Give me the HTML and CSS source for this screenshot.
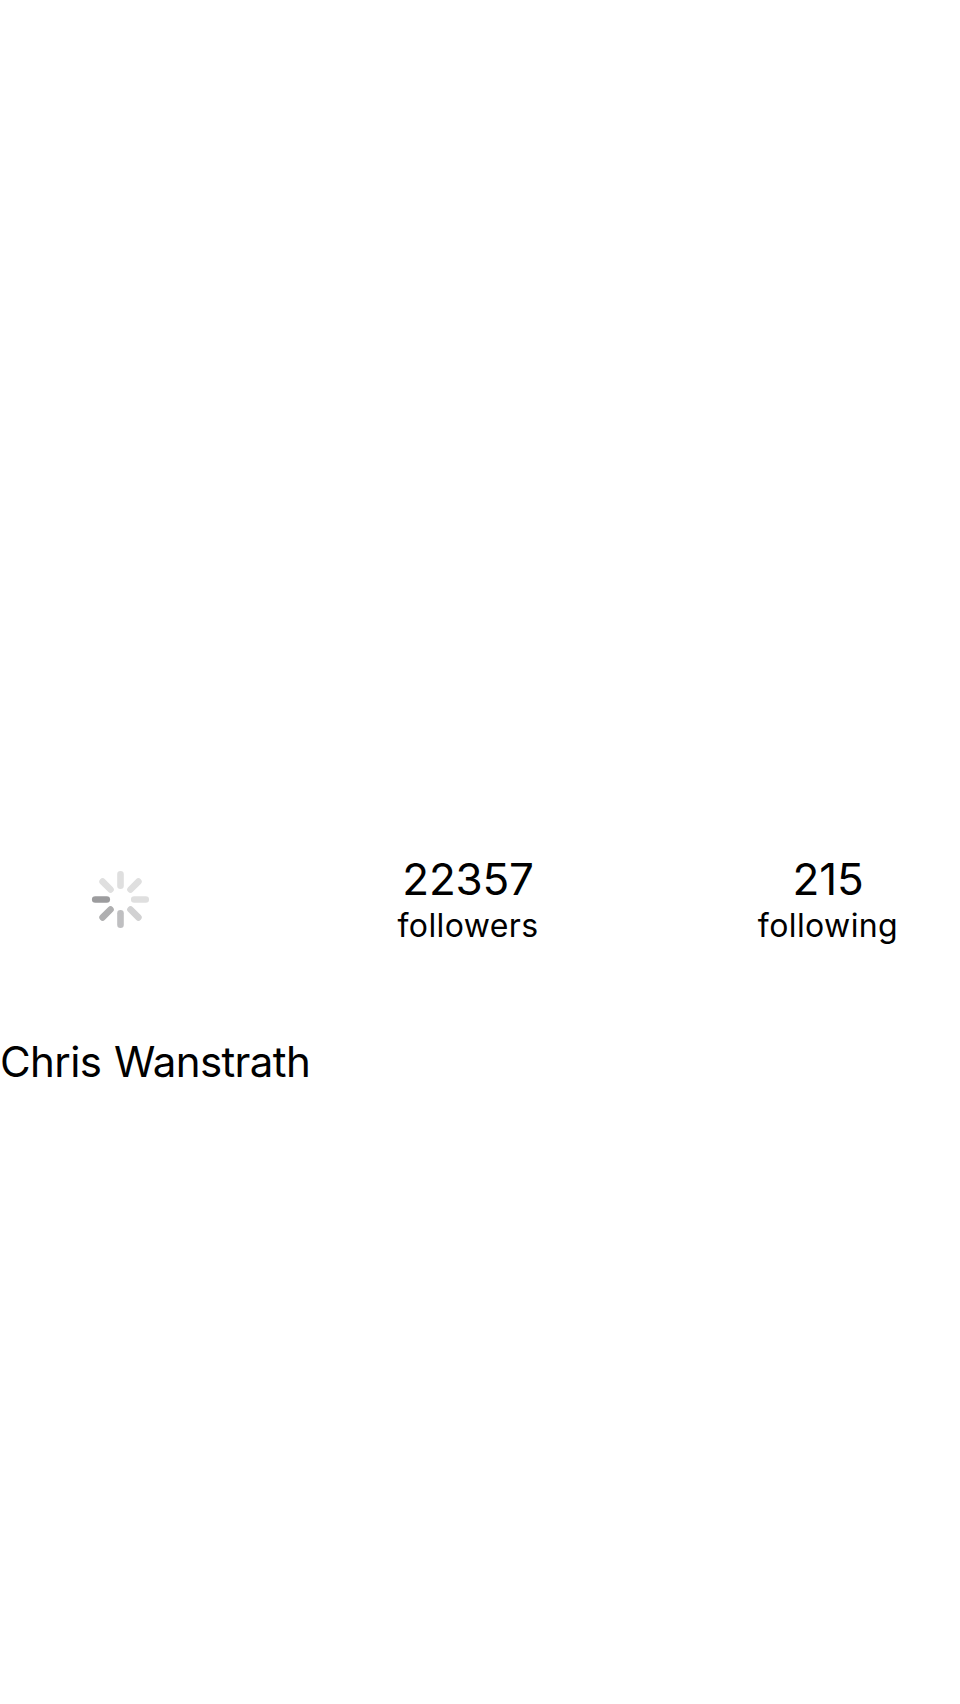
FILE: index.html
```html
<!DOCTYPE html>
<html lang="en">
<head>
<meta charset="utf-8">
<title>Profile</title>
<link rel="stylesheet" href="styles.css">
</head>
<body>
<main class="screen">
  <section class="summary">
    <svg class="spinner" viewBox="-30 -30 60 60" aria-label="Loading">
      <g stroke-width="6.6" stroke-linecap="round">
        <path stroke="#dfdfdf" d="M.5-14.25V-25.75M10.5-10.5L18.4-18.4M14.25-.5H25.75M-9.5-10.5L-17.4-18.4"/>
        <path stroke="#d1d1d2" d="M10.5 9.5L18.4 17.4"/>
        <path stroke="#bfbfc1" d="M.5 13.25V24.75"/>
        <path stroke="#afafb0" d="M-9.5 9.5L-17.4 17.4"/>
        <path stroke="#9c9c9e" d="M-13.25-.5H-24.75"/>
      </g>
    </svg>
    <div class="stats">
      <div class="stat"><span class="count">22357</span><span class="label">followers</span></div>
      <div class="stat"><span class="count">215</span><span class="label">following</span></div>
    </div>
  </section>
  <h1 class="name">Chris Wanstrath</h1>
</main>
</body>
</html>
```
FILE: styles.css
```css
body { margin: 0; background: #fff; color: #000; font-family: Inter, sans-serif; }
.screen { height: 1704px; padding-top: 780px; box-sizing: border-box; }
.summary { display: flex; align-items: center; height: 240px; }
.spinner { width: 60px; height: 60px; margin: 0 48px 0 90px; flex: none; }
.stats { display: grid; grid-template-columns: 360px 360px; margin-left: 90px; }
.stat { display: flex; flex-direction: column; align-items: center; width: 360px; }
.count { font-size: 44px; line-height: 51px; letter-spacing: -0.2px; padding-bottom: 1px; }
.label { font-size: 32px; line-height: 40px; letter-spacing: 0.4px; }
.name { margin: 16px 0 0; font-size: 42px; line-height: 51px; font-weight: 400; letter-spacing: -0.6px; word-spacing: 1.5px; }
```
